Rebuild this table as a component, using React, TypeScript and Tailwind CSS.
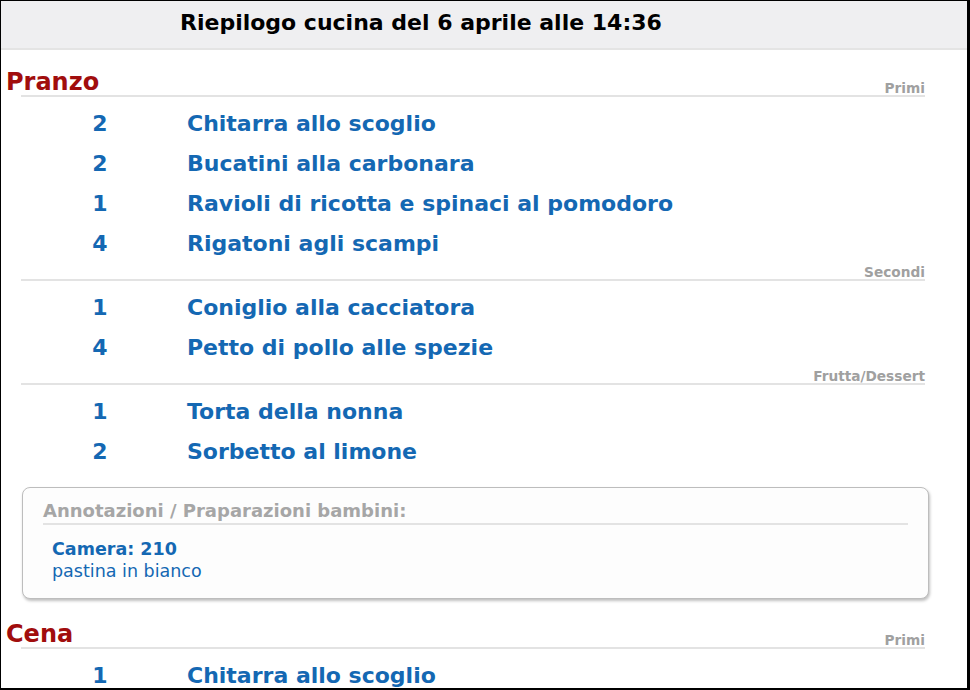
const font = { fontFamily: '"DejaVu Sans", Verdana, sans-serif' };

type Dish = { qty: number; name: string };
type Course = { label: string; dishes: Dish[] };
type Meal = { title: string; courses: Course[]; notes?: { room: string; text: string }[] };

const meals: Meal[] = [
  {
    title: "Pranzo",
    courses: [
      {
        label: "Primi",
        dishes: [
          { qty: 2, name: "Chitarra allo scoglio" },
          { qty: 2, name: "Bucatini alla carbonara" },
          { qty: 1, name: "Ravioli di ricotta e spinaci al pomodoro" },
          { qty: 4, name: "Rigatoni agli scampi" },
        ],
      },
      {
        label: "Secondi",
        dishes: [
          { qty: 1, name: "Coniglio alla cacciatora" },
          { qty: 4, name: "Petto di pollo alle spezie" },
        ],
      },
      {
        label: "Frutta/Dessert",
        dishes: [
          { qty: 1, name: "Torta della nonna" },
          { qty: 2, name: "Sorbetto al limone" },
        ],
      },
    ],
    notes: [{ room: "210", text: "pastina in bianco" }],
  },
  {
    title: "Cena",
    courses: [{ label: "Primi", dishes: [{ qty: 1, name: "Chitarra allo scoglio" }] }],
  },
];

const DishRow = ({ dish }: { dish: Dish }) => (
  <div className="flex h-[40px] items-center text-[22px] font-bold leading-[40px] text-[#1468b3]">
    <div className="ml-[69px] w-[60px] text-center">{dish.qty}</div>
    <div className="ml-[57px]">{dish.name}</div>
  </div>
);

const CourseHeader = ({ label, title }: { label: string; title?: string }) => (
  <div className="ml-[20px] mr-[42px] flex items-end justify-between border-b-2 border-[#e3e3e3]">
    {title ? (
      <h2 className="-ml-[15px] text-[24px] font-bold leading-[26px] text-[#a10d0d]">{title}</h2>
    ) : (
      <span />
    )}
    <span className="text-[13.7px] font-bold leading-[14px] text-[#a0a0a0]">{label}</span>
  </div>
);

const MealBlock = ({ meal, first }: { meal: Meal; first: boolean }) => (
  <section>
    {meal.courses.map((course, i) => (
      <div key={course.label}>
        <div className={i > 0 ? "pt-[1px]" : first ? "pt-[19px]" : "pt-[22px]"}>
          <CourseHeader label={course.label} title={i === 0 ? meal.title : undefined} />
        </div>
        <div className="pt-[7px]">
          {course.dishes.map((d, k) => (
            <DishRow key={k} dish={d} />
          ))}
        </div>
      </div>
    ))}
    {meal.notes && (
      <div className="ml-[21px] mr-[38px] mt-[15px] rounded-lg border border-[#bdbdbd] bg-[#fdfdfd] px-[20px] pb-[16px] pt-[11px] shadow-[1px_2px_3px_rgba(0,0,0,0.25)]">
        <div className="border-b-2 border-[#e3e3e3] text-[18px] font-bold leading-[24px] text-[#a6a6a6]">
          Annotazioni / Praparazioni bambini:
        </div>
        {meal.notes.map((n) => (
          <div key={n.room} className="pl-[9px] pt-[13px] text-[17.5px] leading-[22px] text-[#1468b3]">
            <div className="font-bold">Camera: {n.room}</div>
            <div>{n.text}</div>
          </div>
        ))}
      </div>
    )}
  </section>
);

export default function App() {
  return (
    <div
      style={font}
      className="h-[690px] w-[970px] overflow-hidden border-b-2 border-l border-r-[3px] border-t border-black bg-white"
    >
      <header className="h-[49px] border-b-2 border-[#e4e4e4] bg-[#efeff1]">
        <h1 className="pl-[179px] text-[22px] font-bold leading-[43px] text-black">
          Riepilogo cucina del 6 aprile alle 14:36
        </h1>
      </header>
      {meals.map((m, i) => (
        <MealBlock key={m.title} meal={m} first={i === 0} />
      ))}
    </div>
  );
}
